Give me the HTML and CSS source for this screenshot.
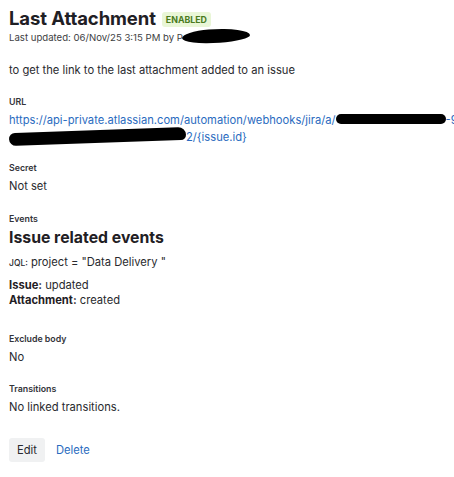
FILE: index.html
```html
<!DOCTYPE html>
<html lang="en">
<head>
<meta charset="utf-8">
<title>Last Attachment</title>
<link rel="stylesheet" href="styles.css">
</head>
<body>
<main class="page">
  <header class="head">
    <div class="title-row">
      <h1 class="title">Last Attachment</h1>
      <span class="lozenge">Enabled</span>
    </div>
    <p class="meta">Last updated: 06/Nov/25 3:15 PM by P<span class="blot blot-name"></span></p>
  </header>

  <p class="desc">to get the link to the last attachment added to an issue</p>

  <section class="field field-url">
    <div class="label">URL</div>
    <a class="url" href="#">
      <span class="url-line">https://api-private.atlassian.com/automation/webhooks/jira/a/<span class="blot blot-id1"></span>-9</span>
      <span class="url-line"><span class="blot blot-id2"></span>2/{issue.id}</span>
    </a>
  </section>

  <section class="field field-secret">
    <div class="label">Secret</div>
    <div class="value">Not set</div>
  </section>

  <section class="field field-events">
    <div class="label">Events</div>
    <h2 class="events-title">Issue related events</h2>
    <div class="jql"><span class="jql-key">JQL:</span> project = "Data Delivery "</div>
    <div class="event-list">
      <div class="value"><b>Issue:</b> updated</div>
      <div class="value"><b>Attachment:</b> created</div>
    </div>
  </section>

  <section class="field field-exclude">
    <div class="label">Exclude body</div>
    <div class="value">No</div>
  </section>

  <section class="field">
    <div class="label">Transitions</div>
    <div class="value">No linked transitions.</div>
  </section>

  <div class="actions">
    <button class="btn" type="button">Edit</button>
    <a class="link-btn" href="#">Delete</a>
  </div>
</main>
</body>
</html>
```

FILE: styles.css
```css
* { box-sizing: border-box; }
html, body { margin: 0; padding: 0; background: #ffffff; }
body {
  font-family: Inter, "Noto Sans", "Liberation Sans", sans-serif;
  color: #292a2e;
  overflow: hidden;
}
.page {
  padding: 7px 9px 0 9px;
  display: flex;
  flex-direction: column;
}
.title-row {
  display: flex;
  align-items: center;
  gap: 6px;
}
.title {
  margin: 0;
  font-size: 18.5px;
  line-height: 23px;
  font-weight: 700;
  color: #1f2024;
  letter-spacing: -0.1px;
}
.lozenge {
  background: #e9f6d7;
  color: #4a7a1d;
  font-size: 8.8px;
  font-weight: 700;
  text-transform: uppercase;
  padding: 1px 4px;
  border-radius: 3px;
  line-height: 13px;
  margin-top: 1px;
}
.meta {
  margin: 1px 0 0 0;
  font-size: 9.6px;
  line-height: 14px;
  color: #3d3e43;
}
.blot {
  display: inline-block;
  background: #000;
  vertical-align: middle;
}
.blot-name {
  width: 68px;
  height: 14px;
  border-radius: 40% 60% 45% 55% / 50% 60% 40% 50%;
  transform: rotate(-4deg);
  margin-left: -1px;
  margin-top: -5px;
}
.desc {
  margin: 17px 0 0 0;
  font-size: 11.2px;
  line-height: 16px;
}
.field {
  margin-top: 18px;
  display: flex;
  flex-direction: column;
}
.field-url { margin-top: 18px; }
.field-secret { margin-top: 16px; }
.field-events { margin-top: 19px; }
.field-exclude { margin-top: 25px; }
.label {
  font-size: 8.8px;
  line-height: 12px;
  font-weight: 600;
  color: #33343a;
  margin-bottom: 4px;
}
.field-events .label { margin-bottom: 2px; }
.value {
  font-size: 11.2px;
  line-height: 16px;
  color: #292a2e;
}
.value b { font-weight: 700; color: #1f2024; }
.url {
  color: #2a6bc0;
  text-decoration: none;
  font-size: 11.2px;
  line-height: 17px;
  display: flex;
  flex-direction: column;
}
.url-line { white-space: nowrap; }
.blot-id1 {
  width: 110px;
  height: 10px;
  border-radius: 6px;
  margin-top: -3px;
}
.blot-id2 {
  width: 177px;
  height: 13px;
  border-radius: 7px 9px 6px 8px;
  transform: rotate(-2deg);
  margin-top: -2px;
}
.events-title {
  margin: 0;
  font-size: 15.8px;
  line-height: 22px;
  font-weight: 700;
  color: #1f2024;
}
.jql {
  margin-top: 5px;
  font-size: 11.2px;
  line-height: 16px;
}
.jql-key {
  font-size: 8.5px;
  font-weight: 500;
}
.event-list {
  margin-top: 7px;
  display: flex;
  flex-direction: column;
}
.event-list .value { line-height: 15px; }
.actions {
  margin-top: 23px;
  display: flex;
  align-items: center;
  gap: 11px;
}
.btn {
  font: inherit;
  font-size: 11.2px;
  color: #292a2e;
  background: #f0f1f2;
  border: 0;
  border-radius: 3px;
  padding: 0 8px;
  height: 24px;
}
.link-btn {
  font-size: 11.2px;
  color: #2a6bc0;
  text-decoration: none;
}
```
